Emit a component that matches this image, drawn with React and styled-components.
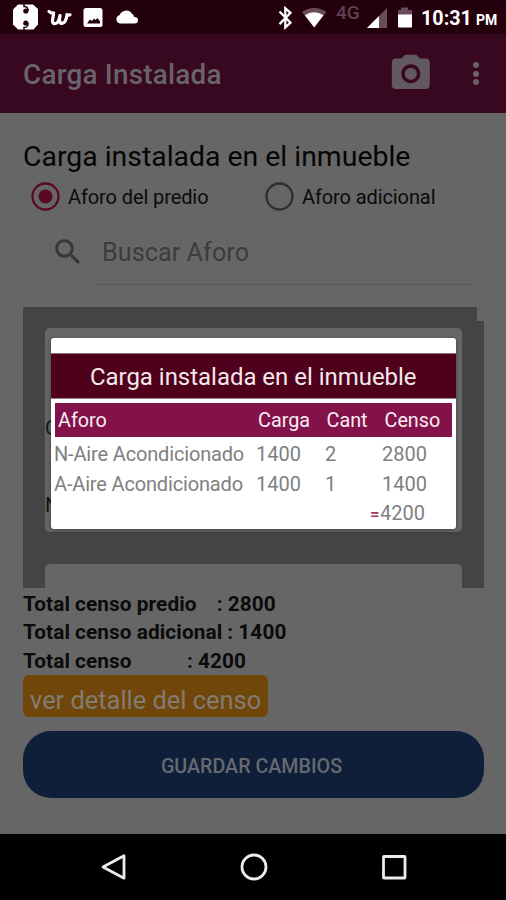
import styled, { createGlobalStyle } from 'styled-components';

const rows=[
 {name:'N-Aire Acondicionado',carga:1400,cant:2,censo:2800},
 {name:'A-Aire Acondicionado',carga:1400,cant:1,censo:1400},
];

const totals=[
 'Total censo predio    : 2800',
 'Total censo adicional : 1400',
 'Total censo           : 4200',
];

function StatusIcons(){
 return(
 <svg width="140" height="34" viewBox="0 0 140 34">
  <path fill="#fff" d="M18 4.500h15l5 4.500v15.500l-4.500 5h-15.500l-5-5V9.500z" />
  <g fill="#24000f">
   <circle cx="25.800" cy="11" r="2.600" />
   <circle cx="25.800" cy="23" r="2.600" />
  </g>
  <g fill="none" stroke="#24000f" strokeWidth="1.500">
   <path d="M24 4v2.500q4.500 0 4 4.500" />
   <path d="M24 30v-2.500q4.500 0 4-4.500" />
  </g>
  <path fill="none" stroke="#fff" strokeWidth="3.200" strokeLinecap="round" strokeLinejoin="round" d="M49 11.500q2.500 2 4.500 1.500q0 3-1 7q-.5 4 3 3.500q3-.5 4.500-8q-1.500 8 2 8q4-.5 5-9q1.500 1 3 .3" />
  <path fill="#fff" fillRule="evenodd" d="M86 8h14q2.500 0 2.500 2.500v14q0 2.500-2.500 2.500h-14q-2.500 0-2.500-2.500v-14q0-2.500 2.500-2.500zM87 23.500h13v-2l-2.500-3.500-2 2-1.500-1.500-2 2.500-2-1.500z" />
  <path fill="#fff" d="M120 23.500a4.200 4.200 0 0 1-.5-8.200a7 7 0 0 1 12.500-1.500q1.800.3 2 3q4 .4 4 3.600q0 3-3.500 3.100z" />
 </svg>
 );
}

function SignalIcons(){
 return(
 <svg width="60" height="34" viewBox="276 0 60 34">
  <path fill="none" stroke="#fff" strokeWidth="2.300" d="M279.500 11.500l11 11.300-5.200 4.600V8.200l5.200 4.600-11 11.300" />
  <path fill="#6b4c5a" d="M302 12q12-8 24.500 0l-12.300 15z" />
  <path fill="#fff" d="M304.800 15.300q9.300-6.300 18.700 0L314.200 27.500z" />
 </svg>
 );
}

function CellIcons(){
 return(
 <svg width="48" height="34" viewBox="364 0 48 34">
  <path fill="#6b4c5a" d="M387 8v20h-20z" />
  <path fill="#fff" d="M379 16v12h-12z" />
  <path fill="#6b4c5a" d="M398 10h3V7.500h7V10h4v6h-14z" />
  <path fill="#fff" d="M398 14.500h14v12q0 1-1 1h-12q-1 0-1-1z" />
 </svg>
 );
}

function Radio({checked}){
 const color=checked ? '#590825' : '#2e2e2e';
 return(
 <svg width="29" height="29" viewBox="0 0 29 29">
  <circle cx="14.5" cy="14.500" r="13" fill="none" stroke={color} strokeWidth="2.300" />
  {checked && <circle cx="14.5" cy="14.500" r="7" fill={color} />}
 </svg>
 );
}

function App(){
 return(
 <Screen>
  <GlobalStyle />
  <StatusBar>
   <StatusIcons />
   <StatusRight>
    <SignalIcons />
    <Network>4G</Network>
    <CellIcons />
    <Clock>10:31 <small>PM</small></Clock>
   </StatusRight>
  </StatusBar>
  <Toolbar>
   <Title>Carga Instalada</Title>
   <svg width="45.6" height="45.6" viewBox="0 0 24 24" fill="#625860">
    <circle cx="12" cy="12" r="3.200" />
    <path d="M9 2L7.170 4H4c-1.100 0-2 .9-2 2v12c0 1.100.9 2 2 2h16c1.100 0 2-.9 2-2V6c0-1.100-.9-2-2-2h-3.170L15 2H9zm3 15c-2.760 0-5-2.240-5-5s2.240-5 5-5 5 2.240 5 5-2.240 5-5 5z" />
   </svg>
   <MenuDots><span /><span /><span /></MenuDots>
  </Toolbar>
  <Content>
   <Heading>Carga instalada en el inmueble</Heading>
   <Options>
    <Option><Radio checked /><span>Aforo del predio</span></Option>
    <Option><Radio /><span>Aforo adicional</span></Option>
   </Options>
   <Search>
    <svg width="34" height="34" viewBox="0 0 24 24" fill="#363636">
     <path d="M15.500 14h-.79l-.28-.27C15.410 12.590 16 11.110 16 9.500 16 5.910 13.090 3 9.500 3S3 5.910 3 9.500 5.910 16 9.500 16c1.610 0 3.090-.59 4.230-1.570l.27.28v.79l5 4.990L20.490 19l-4.990-5zm-6 0C7.010 14 5 11.990 5 9.500S7.010 5 9.500 5 14 7.010 14 9.500 11.990 14 9.500 14z" />
    </svg>
    <SearchField>Buscar Aforo</SearchField>
   </Search>
   <ListArea>
    <List>
     <Card>
      <span>C</span>
      <span>N</span>
     </Card>
     <NextCard />
    </List>
    <Edge />
   </ListArea>
   <Totals>
    {totals.map((t)=><TotalLine key={t}>{t}</TotalLine>)}
   </Totals>
   <DetailButton>ver detalle del censo</DetailButton>
   <SaveButton>GUARDAR CAMBIOS</SaveButton>
  </Content>
  <NavBar>
   <svg width="30" height="30" viewBox="0 0 30 30"><path d="M25 3.800v22.400L4 15z" /></svg>
   <svg width="30" height="30" viewBox="0 0 30 30"><circle cx="15" cy="15" r="12" /></svg>
   <svg width="30" height="30" viewBox="0 0 30 30"><rect x="4.500" y="4.500" width="21.500" height="21.500" rx=".5" /></svg>
  </NavBar>
  <Dialog>
   <DialogTitle>Carga instalada en el inmueble</DialogTitle>
   <TableHead>
    <span>Aforo</span><span>Carga</span><span>Cant</span><span>Censo</span>
   </TableHead>
   {rows.map((r)=>(
    <TableRow key={r.name}>
     <Name>{r.name}</Name><span>{r.carga}</span><span>{r.cant}</span><span>{r.censo}</span>
    </TableRow>
   ))}
   <Sum><b>=</b>4200</Sum>
  </Dialog>
 </Screen>
 );
}

const GlobalStyle=createGlobalStyle`
 *{
  box-sizing:border-box;
 }

 body{
  margin:0;
  font-family:Roboto,"Liberation Sans",sans-serif;
 }

 svg{
  display:block;
  flex-shrink:0;
 }
`;

const Screen=styled.div`
 position:relative;
 width:506px;
 height:900px;
 overflow:hidden;
 display:flex;
 flex-direction:column;
 background:#666;
`;

const StatusBar=styled.div`
 height:34px;
 display:flex;
 justify-content:space-between;
 background:#24000f;
`;

const StatusRight=styled.div`
 display:flex;
 width:230px;
`;

const Network=styled.span`
 width:28px;
 font-size:19px;
 font-weight:500;
 line-height:26px;
 color:#5e404e;
`;

const Clock=styled.span`
 padding-left:9px;
 font-size:19.800px;
 line-height:37px;
 font-weight:700;
 color:#fff;
 white-space:nowrap;

 small{
  font-size:14px;
  margin-left:-1px;
 }
`;

const Toolbar=styled.div`
 height:79px;
 padding:0 27px 0 23px;
 display:flex;
 align-items:center;
 background:#370820;
`;

const Title=styled.div`
 flex:1;
 padding-top:2px;
 font-size:27.800px;
 font-weight:500;
 letter-spacing:0.250px;
 color:#6b636a;
`;

const MenuDots=styled.div`
 width:6px;
 margin-left:39px;
 display:flex;
 flex-direction:column;
 gap:2.500px;

 span{
  height:6px;
  border-radius:50%;
  background:#6b636a;
 }
`;

const Content=styled.div`
 height:720.500px;
 padding:26px 22px 0 23px;
 color:#0b0b0b;
`;

const Heading=styled.div`
 height:34px;
 line-height:36px;
 font-size:28.400px;
 white-space:nowrap;
 color:#050505;
`;

const Options=styled.div`
 display:flex;
 height:46px;
 padding-left:8px;
`;

const Option=styled.div`
 flex:0 0 234px;
 display:flex;
 align-items:center;
 gap:8px;
 font-size:20px;
 letter-spacing:-0.100px;
 white-space:nowrap;

 span{
  padding-top:1px;
 }
`;

const Search=styled.div`
 display:flex;
 height:66px;
 padding:16px 11px 0 28px;
`;

const SearchField=styled.div`
 flex:1;
 height:50px;
 margin-left:7px;
 padding-left:10px;
 border-bottom:1px solid #5a5a5a;
 font-size:25.300px;
 line-height:36px;
 color:#3c3c3c;
`;

const ListArea=styled.div`
 display:flex;
 height:281px;
 margin-top:22px;
`;

const List=styled.div`
 width:454px;
 padding:21px 15px 0 22px;
 background:#444;
`;

const Edge=styled.div`
 width:7px;
 margin-top:14px;
 background:#444;
`;

const Card=styled.div`
 height:204px;
 padding-top:88px;
 border-radius:5px;
 background:#666;
 color:#151515;
 font-size:20px;

 span{
  display:block;
  height:77px;
  line-height:24px;
 }
`;

const NextCard=styled.div`
 height:24px;
 margin-top:32px;
 border-radius:5px 5px 0 0;
 background:#666;
`;

const Totals=styled.div`
 padding-top:1.500px;
 height:87px;
`;

const TotalLine=styled.div`
 white-space:pre;
 font-size:20.800px;
 line-height:28.800px;
 font-weight:700;
 letter-spacing:0.100px;
 word-spacing:-0.250px;
`;

const DetailButton=styled.button`
 display:block;
 width:245px;
 height:41.500px;
 padding:9px 0 0 7px;
 border:none;
 border-radius:6px;
 background:#70460a;
 color:#837c72;
 font-family:inherit;
 font-size:25.400px;
 text-align:left;
 white-space:nowrap;
`;

const SaveButton=styled.button`
 display:block;
 width:461px;
 height:67px;
 margin-top:14.500px;
 padding:3px 4px 0 0;
 border:none;
 border-radius:28px;
 background:#0f1e39;
 color:#666a70;
 font-family:inherit;
 font-size:19.700px;
 font-weight:500;
`;

const NavBar=styled.div`
 flex:1;
 display:flex;
 align-items:center;
 justify-content:space-between;
 padding:0 97px 0 99px;
 background:#000;

 svg{
  fill:none;
  stroke:#ececec;
  stroke-width:2.800px;
  stroke-linejoin:round;
 }
`;

const Dialog=styled.div`
 position:absolute;
 left:51px;
 top:338px;
 width:404.500px;
 height:190.500px;
 padding-top:15px;
 border-radius:3px;
 background:#fff;
 box-shadow:0 1px 4px rgba(0,0,0,0.35);
`;

const DialogTitle=styled.div`
 height:46px;
 line-height:46px;
 border-top:1px solid #8c7570;
 border-bottom:1px solid #8f8580;
 background:#4f001d;
 color:#f3e9e9;
 font-size:23.950px;
 text-align:center;
 white-space:nowrap;
`;

const TableHead=styled.div`
 display:grid;
 grid-template-columns:200px 68.500px 58px 1fr;
 margin:3.500px 3.500px 2px;
 padding-left:3.500px;
 height:34px;
 line-height:36px;
 background:#84124a;
 color:#f7edf1;
 font-size:19.800px;
`;

const TableRow=styled.div`
 display:grid;
 grid-template-columns:202px 69px 57px 1fr;
 padding-left:3px;
 height:30.300px;
 line-height:30px;
 font-size:20px;
 color:#808080;
 white-space:nowrap;
`;

const Name=styled.span`
 letter-spacing:-0.160px;
`;

const Sum=styled.div`
 padding-left:319px;
 line-height:29px;
 font-size:20px;
 color:#808080;

 b{
  display:inline-block;
  width:10px;
  font-size:17px;
  font-weight:500;
  color:#a03a5c;
 }
`;

export default App;
